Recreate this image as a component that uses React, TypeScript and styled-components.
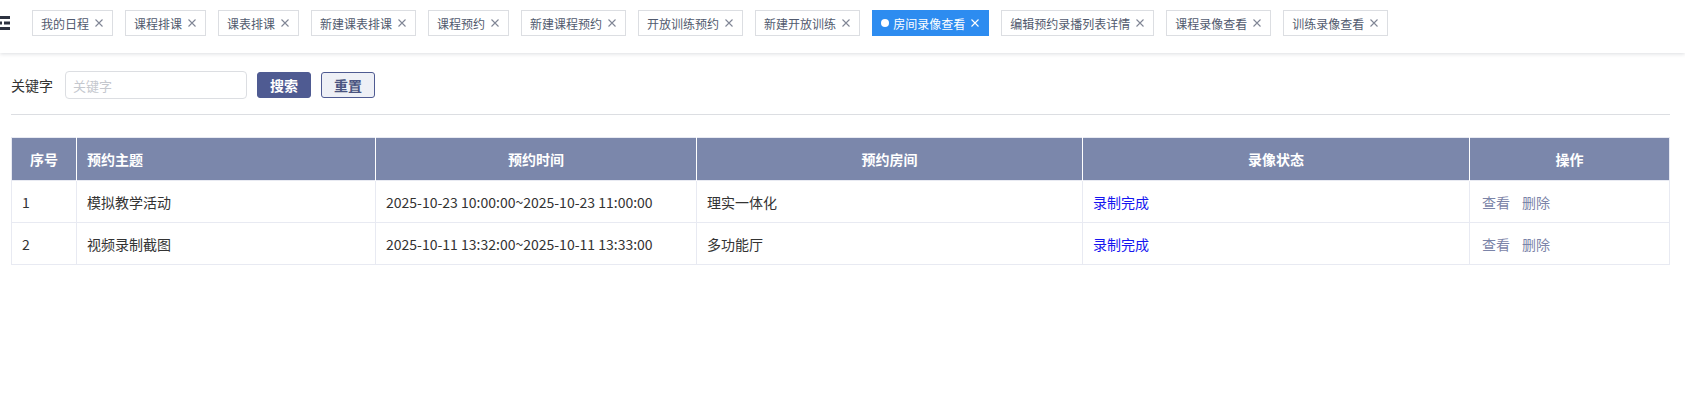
import React from 'react';
import styled, { createGlobalStyle } from 'styled-components';

const GlobalStyle = createGlobalStyle`
  body {
    margin: 0;
    background: #fff;
    font-family: "Noto Sans CJK SC", "Noto Sans", sans-serif;
    color: #333;
  }
`;

const Page = styled.div`
  width: 1685px;
  min-height: 400px;
  background: #fff;
`;

const TagBar = styled.header`
  height: 53px;
  display: flex;
  align-items: flex-start;
  padding-top: 10px;
  box-sizing: border-box;
  box-shadow: 0 1px 4px rgba(0, 21, 41, 0.14);
  position: relative;
  z-index: 1;
`;

const MenuToggle = styled.div`
  width: 32px;
  height: 26px;
  display: flex;
  align-items: center;
  flex-shrink: 0;
`;

const Tags = styled.div`
  display: flex;
  gap: 12px;
`;

const Tag = styled.div<{ $active?: boolean }>`
  height: 26px;
  box-sizing: border-box;
  display: flex;
  align-items: center;
  padding: 0 9px 0 8px;
  gap: 6px;
  font-size: 12px;
  white-space: nowrap;
  border: 1px solid ${(p) => (p.$active ? '#2d8cf0' : '#dcdee2')};
  background: ${(p) => (p.$active ? '#2d8cf0' : '#fff')};
  color: ${(p) => (p.$active ? '#fff' : '#515a6e')};
`;

const Dot = styled.span`
  width: 8px;
  height: 8px;
  border-radius: 50%;
  background: #fff;
  margin-right: -2px;
`;

const Content = styled.main`
  padding: 17px 15px 0 11px;
`;

const SearchRow = styled.div`
  display: flex;
  align-items: center;
  height: 30px;
  padding-bottom: 14px;
  border-bottom: 1px solid #dcdee2;
`;

const Label = styled.label`
  font-size: 14px;
  color: #333;
  margin-right: 12px;
`;

const Input = styled.input`
  width: 182px;
  height: 28px;
  box-sizing: border-box;
  border: 1px solid #dcdee2;
  border-radius: 4px;
  padding: 0 7px;
  font-family: inherit;
  font-size: 13px;
  color: #515a6e;
  outline: none;
  margin-right: 10px;

  &::placeholder {
    color: #c5c8ce;
  }
`;

const Button = styled.button<{ $primary?: boolean }>`
  width: 54px;
  height: 26px;
  box-sizing: border-box;
  border-radius: 3px;
  font-family: inherit;
  font-size: 14px;
  font-weight: 700;
  padding: 0;
  margin-right: 10px;
  cursor: pointer;
  border: 1px solid #4f5b92;
  background: ${(p) => (p.$primary ? '#4f5b92' : '#eef0f6')};
  color: ${(p) => (p.$primary ? '#fff' : '#4a5480')};
`;

const Table = styled.table`
  margin-top: 22px;
  width: 100%;
  table-layout: fixed;
  border-collapse: collapse;
  font-size: 14px;
  border: 1px solid #e8eaf2;
`;

const HeadCell = styled.th<{ $left?: boolean }>`
  height: 42px;
  background: #7b87ab;
  color: #fff;
  font-weight: 700;
  text-align: ${(p) => (p.$left ? 'left' : 'center')};
  padding: 0 10px;
  border-left: 1px solid #fff;

  &:first-child {
    border-left: none;
  }
`;

const Cell = styled.td`
  height: 41px;
  padding: 0 10px;
  border: 1px solid #e8eaf2;
  color: #333;
  white-space: nowrap;
`;

const StatusLink = styled.a`
  color: #1515f0;
  text-decoration: none;
`;

const Actions = styled.div`
  display: flex;
  gap: 12px;
  padding-left: 2px;
`;

const ActionLink = styled.a`
  color: #7b84a8;
  text-decoration: none;
  cursor: pointer;
`;

const MenuIcon = () => (
  <svg width="11" height="16" viewBox="0 0 11 16">
    <rect x="-2" y="1" width="12" height="3" fill="#2d3240" />
    <rect x="-2" y="6.5" width="4" height="3" fill="#2d3240" />
    <rect x="4" y="6.5" width="6" height="3" fill="#2d3240" />
    <rect x="-2" y="12" width="12" height="3" fill="#2d3240" />
  </svg>
);

const CloseIcon = ({ color }: { color: string }) => (
  <svg width="8" height="8" viewBox="0 0 8 8">
    <path d="M0.5 0.5L7.5 7.5M7.5 0.5L0.5 7.5" stroke={color} strokeWidth="1.1" />
  </svg>
);

const tags = [
  '我的日程',
  '课程排课',
  '课表排课',
  '新建课表排课',
  '课程预约',
  '新建课程预约',
  '开放训练预约',
  '新建开放训练',
  '房间录像查看',
  '编辑预约录播列表详情',
  '课程录像查看',
  '训练录像查看',
];

const rows = [
  {
    id: 1,
    topic: '模拟教学活动',
    time: '2025-10-23 10:00:00~2025-10-23 11:00:00',
    room: '理实一体化',
    status: '录制完成',
  },
  {
    id: 2,
    topic: '视频录制截图',
    time: '2025-10-11 13:32:00~2025-10-11 13:33:00',
    room: '多功能厅',
    status: '录制完成',
  },
];

const App: React.FC = () => {
  return (
    <Page>
      <GlobalStyle />
      <TagBar>
        <MenuToggle>
          <MenuIcon />
        </MenuToggle>
        <Tags>
          {tags.map((t) => {
            const active = t === '房间录像查看';
            return (
              <Tag key={t} $active={active}>
                {active && <Dot />}
                {t}
                <CloseIcon color={active ? '#fff' : '#808695'} />
              </Tag>
            );
          })}
        </Tags>
      </TagBar>

      <Content>
        <SearchRow>
          <Label>关键字</Label>
          <Input placeholder="关键字" />
          <Button $primary>搜索</Button>
          <Button>重置</Button>
        </SearchRow>

        <Table>
          <colgroup>
            <col style={{ width: 65 }} />
            <col style={{ width: 299 }} />
            <col style={{ width: 321 }} />
            <col style={{ width: 386 }} />
            <col style={{ width: 387 }} />
            <col />
          </colgroup>
          <thead>
            <tr>
              <HeadCell>序号</HeadCell>
              <HeadCell $left>预约主题</HeadCell>
              <HeadCell>预约时间</HeadCell>
              <HeadCell>预约房间</HeadCell>
              <HeadCell>录像状态</HeadCell>
              <HeadCell>操作</HeadCell>
            </tr>
          </thead>
          <tbody>
            {rows.map((r) => (
              <tr key={r.id}>
                <Cell>{r.id}</Cell>
                <Cell>{r.topic}</Cell>
                <Cell>{r.time}</Cell>
                <Cell>{r.room}</Cell>
                <Cell>
                  <StatusLink>{r.status}</StatusLink>
                </Cell>
                <Cell>
                  <Actions>
                    <ActionLink>查看</ActionLink>
                    <ActionLink>删除</ActionLink>
                  </Actions>
                </Cell>
              </tr>
            ))}
          </tbody>
        </Table>
      </Content>
    </Page>
  );
};

export default App;
